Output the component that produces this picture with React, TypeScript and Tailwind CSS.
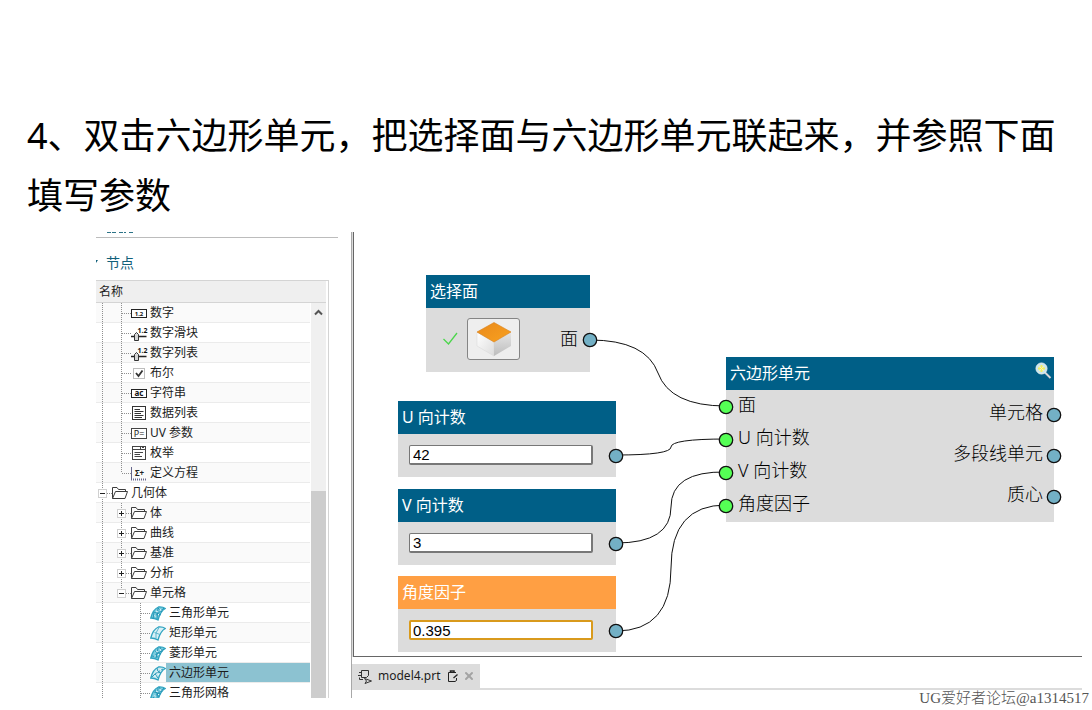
import React, { useState } from "react";
import { X } from "lucide-react";

type Guide = "line" | "tee" | "end" | "plus" | "minus" | "minusEnd" | "blank";

type Row = {
  label: string;
  icon: string;
  guides: Guide[];
};

const rows: Row[] = [
  { label: "数字", icon: "number", guides: ["line", "tee"] },
  { label: "数字滑块", icon: "slider", guides: ["line", "tee"] },
  { label: "数字列表", icon: "slider", guides: ["line", "tee"] },
  { label: "布尔", icon: "bool", guides: ["line", "tee"] },
  { label: "字符串", icon: "string", guides: ["line", "tee"] },
  { label: "数据列表", icon: "list", guides: ["line", "tee"] },
  { label: "UV 参数", icon: "uv", guides: ["line", "tee"] },
  { label: "枚举", icon: "enum", guides: ["line", "tee"] },
  { label: "定义方程", icon: "equation", guides: ["line", "end"] },
  { label: "几何体", icon: "folder", guides: ["minus"] },
  { label: "体", icon: "folder", guides: ["line", "plus"] },
  { label: "曲线", icon: "folder", guides: ["line", "plus"] },
  { label: "基准", icon: "folder", guides: ["line", "plus"] },
  { label: "分析", icon: "folder", guides: ["line", "plus"] },
  { label: "单元格", icon: "folder", guides: ["line", "minusEnd"] },
  { label: "三角形单元", icon: "tri", guides: ["line", "blank", "tee"] },
  { label: "矩形单元", icon: "rect", guides: ["line", "blank", "tee"] },
  { label: "菱形单元", icon: "rhomb", guides: ["line", "blank", "tee"] },
  { label: "六边形单元", icon: "hex", guides: ["line", "blank", "tee"] },
  { label: "三角形网格", icon: "mesh", guides: ["line", "blank", "tee"] },
];

const TreeGuide = ({ type, first }: { type: Guide; first: boolean }) => {
  const box = type === "plus" || type === "minus" || type === "minusEnd";
  const stopsHalfway = type === "end" || type === "minusEnd";
  return (
    <svg
      className={first ? "w-4 h-5 shrink-0" : "w-[19px] h-5 shrink-0"}
      viewBox={first ? "3 0 16 20" : "0 0 19 20"}
      aria-hidden="true"
    >
      {type !== "blank" && (
        <path
          d={stopsHalfway ? "M9.5 0V10" : "M9.5 0V20"}
          stroke="#8f8f8f"
          strokeDasharray="1 1"
        />
      )}
      {type !== "blank" && type !== "line" && (
        <path d="M10 10.5H19" stroke="#8f8f8f" strokeDasharray="1 1" />
      )}
      {box && (
        <>
          <rect x="5.5" y="6.5" width="8" height="8" fill="#fff" stroke="#d0d0d0" />
          <path
            d={type === "plus" ? "M7 10.5H12M9.5 8V13" : "M7 10.5H12"}
            stroke="#222"
          />
        </>
      )}
    </svg>
  );
};

const meshLines: Record<string, string> = {
  tri: "M4 7L11 10M8 3L7 14M14 3L4 12M8 3L12 7M4 7L3 14",
  rect: "M4.5 7.5L10 9.5M9 2.5L6 8L6 13.5",
  rhomb: "M5 6L11 9M8 3L6 13M14 4L4 11M10 2L12 7M2 11L8 12",
  hex: "M7 3L8 7L13 4M8 7L5 9L8 13M5 9L2 12M8 7L11 8",
  mesh: "M4 7L11 9M8 3L7 14M14 3L3 13M9 2L12 7M5 5L9 12",
};

const TreeIcon = ({ name }: { name: string }) => {
  if (name in meshLines) {
    return (
      <svg className="size-4 shrink-0" viewBox="0 0 16 16" fill="none" aria-hidden="true">
        <path
          d="M0.8 13C2 8 5 3.500 8.500 2C11 1.800 13.500 2.200 15.300 3.500C11.500 5.500 9.500 9.500 8 15C6 13.800 3.500 13 0.800 13Z"
          fill={name === "rect" ? "#d9f0f6" : name === "hex" ? "#c4e8f0" : "#7accdf"}
          stroke="#2fa3c0"
          strokeWidth="1.3"
        />
        <path d={meshLines[name]} stroke={name === "rect" ? "#4fb0ca" : "#1f92b2"} strokeWidth="0.9" />
        {name !== "rect" && <path d="M6 6L8 7M10 4L11 6M4 11L6 11M8 10L9 9" stroke="#eefafc" />}
      </svg>
    );
  }
  return (
    <svg className="size-4 shrink-0 overflow-visible" viewBox="0 0 16 16" fill="none" aria-hidden="true">
      {name === "folder" && (
        <g stroke="#3c3c3c">
          <path d="M0.5 13.5V2.5H5L6.5 4.5H13.5V6.5" />
          <path d="M0.5 13.5L3.5 6.5H15.5L13 13.5Z" fill="#fff" />
        </g>
      )}
      {name === "number" && (
        <>
          <rect x="0.5" y="4.5" width="15" height="8" fill="#fff" stroke="#222" />
          <text x="8" y="11" fontSize="6" fontWeight="700" textAnchor="middle" fill="#111">1.2</text>
        </>
      )}
      {name === "slider" && (
        <>
          <path d="M0 11.5H3M8 11.5H15.5" stroke="#222" strokeWidth="1.4" />
          <path d="M3.5 15.5V9.5L5.5 7.5L7.5 9.5V15.5Z" fill="#d6d6d6" stroke="#333" />
          <text x="11.5" y="8" fontSize="7" fontWeight="700" textAnchor="middle" fill="#111">1.2</text>
        </>
      )}
      {name === "bool" && (
        <>
          <rect x="2.5" y="3.5" width="11" height="10" fill="#fff" stroke="#bdbdbd" />
          <path d="M5 8L7.5 11L11.5 5.5" stroke="#333" strokeWidth="1.8" />
        </>
      )}
      {name === "string" && (
        <>
          <rect x="0.5" y="4.5" width="15" height="8" fill="#fff" stroke="#222" />
          <text x="8" y="11" fontSize="8" fontWeight="700" textAnchor="middle" fill="#111">ac</text>
        </>
      )}
      {name === "list" && (
        <g stroke="#333">
          <rect x="1.5" y="1.5" width="13" height="13" fill="#fff" />
          <path d="M3.5 4.5H9M3.5 6.5H12.5M3.5 8.5H10M3.5 10.5H12.5M3.5 12.5H11" />
        </g>
      )}
      {name === "uv" && (
        <>
          <rect x="0.5" y="3.5" width="15" height="10" fill="#fff" stroke="#444" />
          <text x="8" y="12" fontSize="9" textAnchor="middle" fill="#222">P=</text>
        </>
      )}
      {name === "enum" && (
        <g stroke="#444">
          <rect x="1.5" y="1.5" width="13" height="13" fill="#fff" />
          <path d="M1.5 4.5H14.5M9.5 1.5V4.5M11 2.5H13M3.5 7.5H12M3.5 9.5H9M3.5 11.5H11" />
        </g>
      )}
      {name === "equation" && (
        <>
          <path d="M0.5 2V15.5" stroke="#66668c" />
          <path d="M2 14.5H15" stroke="#66668c" strokeDasharray="1 1" strokeWidth="2" />
          <text x="8.5" y="11" fontSize="8" fontWeight="700" textAnchor="middle" fill="#222">Σ+</text>
        </>
      )}
    </svg>
  );
};

const Port = ({ side, color }: { side: "left" | "right"; color: string }) => (
  <svg
    className={`absolute top-1/2 -translate-y-1/2 z-10 size-4 ${
      side === "left" ? "-left-2" : "-right-2"
    }`}
    viewBox="0 0 16 16"
    aria-hidden="true"
  >
    <circle cx="8" cy="8" r="6.7" fill={color} stroke="#111" strokeWidth="1.3" />
  </svg>
);

const params = [
  { id: "u", title: "U 向计数", value: "42", place: "top-[169px]", active: false },
  { id: "v", title: "V 向计数", value: "3", place: "top-[257px]", active: false },
  { id: "angle", title: "角度因子", value: "0.395", place: "top-[344px]", active: true },
];

const inputs = ["面", "U 向计数", "V 向计数", "角度因子"];
const outputs = ["单元格", "多段线单元", "质心"];

const wires = [
  "M236 108Q292 108 304 141T372 174",
  "M262 223Q317 223 317 215T372 207",
  "M262 311Q317 311 317 275T372 240",
  "M262 399Q317 399 317 336T372 273",
];

const NodeTree = () => {
  const [selected, setSelected] = useState("六边形单元");

  return (
    <aside className="w-[242px] mr-[13px] shrink-0 flex flex-col overflow-hidden">
      <svg className="h-[5px] w-full shrink-0" aria-hidden="true">
        <path d="M11 0.5H20M23 0.5H30M33 0.5H37" stroke="#2d7488" strokeDasharray="4 1" />
      </svg>
      <h2 className="relative border-t border-[#bcbcbc] pl-[10px] pt-[11px] h-[43px] shrink-0 text-sm leading-7 text-[#12607a]">
        <svg className="absolute left-0 top-[22px] size-1" viewBox="0 0 4 4" aria-hidden="true">
          <path d="M0 0H2L0 3Z" fill="#12607a" />
        </svg>
        节点
      </h2>
      <div className="flex flex-col flex-1 min-h-0 mr-[9px] border-t border-r border-[#d4d4d4] pr-[2px] text-xs text-[#1c1c1c]">
        <div className="h-[22px] shrink-0 border-b border-[#d4d4d4] bg-[#efefef] pl-[3px] leading-[22px]">
          名称
        </div>
        <div className="flex flex-1 min-h-0">
          <ul className="flex-1 overflow-hidden">
            {rows.map((row) => (
              <li key={row.label} className="h-5 flex items-center odd:bg-[#fafafa] border-b border-[#ebebeb]">
                {row.guides.map((guide, i) => (
                  <TreeGuide key={i} type={guide} first={i === 0} />
                ))}
                <TreeIcon name={row.icon} />
                <button
                  type="button"
                  onClick={() => setSelected(row.label)}
                  className={`flex-1 h-[19px] pl-[3px] text-left leading-[18px] whitespace-nowrap ${
                    selected === row.label ? "bg-[#8cc2d1]" : ""
                  }`}
                >
                  {row.label}
                </button>
              </li>
            ))}
          </ul>
          <div className="w-[15px] ml-px bg-[#f0f0f0] flex flex-col">
            <svg className="w-[15px] h-[18px] shrink-0" viewBox="0 0 15 18" fill="none" aria-hidden="true">
              <path d="M4 11.5L7.5 8L11 11.5" stroke="#555" strokeWidth="2" />
            </svg>
            <div className="mt-auto h-[52.5%] bg-[#cdcdcd]" />
          </div>
        </div>
      </div>
    </aside>
  );
};

const Canvas = () => (
  <div className="relative flex-1 min-h-0 border-l border-b border-[#666]">
    <svg className="absolute inset-0 size-full" fill="none" stroke="#111" aria-hidden="true">
      {wires.map((d) => (
        <path key={d} d={d} />
      ))}
    </svg>

    {/* Face picker */}
    <section className="absolute left-[72px] top-[43px] w-[164px] bg-[#dcdcdc]">
      <h3 className="h-[33px] bg-[#005f87] pl-1 text-base leading-[33px] text-white">选择面</h3>
      <div className="relative h-16 flex items-start pt-[10px] pl-4 pr-3">
        <svg className="size-[18px] mt-[11px]" viewBox="0 0 18 18" fill="none" aria-hidden="true">
          <path d="M1.5 10L6.5 15L15 4" stroke="#4bd64b" strokeWidth="1.3" />
        </svg>
        <button
          type="button"
          aria-label="选择面"
          className="ml-[7px] w-[53px] h-[42px] rounded-[3px] border border-[#858585] bg-[#eee] flex justify-center items-center"
        >
          <svg className="w-9 h-9" viewBox="0 0 36 36" aria-hidden="true">
            <defs>
              <linearGradient id="cubeTop" x1="0" y1="0" x2="1" y2="1">
                <stop offset="0" stopColor="#e98a1c" />
                <stop offset="1" stopColor="#f9a11f" />
              </linearGradient>
              <linearGradient id="cubeLeft" x1="0" y1="0" x2="1" y2="1">
                <stop offset="0" stopColor="#fff" />
                <stop offset="1" stopColor="#dcdcdc" />
              </linearGradient>
              <linearGradient id="cubeRight" x1="0" y1="0" x2="0" y2="1">
                <stop offset="0" stopColor="#e6e6e6" />
                <stop offset="1" stopColor="#bdbdbd" />
              </linearGradient>
            </defs>
            <path d="M1 11L18 21V35L1 25Z" fill="url(#cubeLeft)" stroke="#d6d6d6" strokeWidth="0.5" />
            <path d="M35 11L18 21V35L35 25Z" fill="url(#cubeRight)" />
            <path d="M18 1.5L35 11L18 21L1 11Z" fill="url(#cubeTop)" stroke="#d97f17" strokeWidth="0.6" />
          </svg>
        </button>
        <span className="ml-auto text-lg leading-10 font-light">面</span>
        <Port side="right" color="#73b0c5" />
      </div>
    </section>

    {/* Numeric parameters */}
    {params.map((p) => (
      <section key={p.id} className={`absolute left-[44px] w-[218px] bg-[#dcdcdc] ${p.place}`}>
        <label
          htmlFor={p.id}
          className={`block h-[33px] pl-1 text-base leading-[33px] text-white ${
            p.active ? "bg-[#ff9f43]" : "bg-[#005f87]"
          }`}
        >
          {p.title}
        </label>
        <div className="relative h-[43px] pt-[11px] pl-[11px]">
          <input
            id={p.id}
            defaultValue={p.value}
            className={`block w-[184px] h-5 rounded-[2px] bg-white font-['Liberation_Sans',sans-serif] text-[15px] leading-4 outline-none ${
              p.active
                ? "border-2 border-[#d99a1c] pl-[2px]"
                : "border border-r-2 border-b-2 border-[#777] pl-[3px]"
            }`}
          />
          <Port side="right" color="#73b0c5" />
        </div>
      </section>
    ))}

    {/* Hexagon cell */}
    <section className="absolute left-[372px] top-[125px] w-[328px] bg-[#dcdcdc]">
      <h3 className="h-[33px] bg-[#005f87] flex justify-between pl-1 pr-[2px] text-base leading-[33px] text-white">
        六边形单元
        <svg className="size-[18px] mt-1" viewBox="0 0 18 18" fill="none" aria-hidden="true">
          <path d="M10.5 11L16.5 17" stroke="#d8d8d8" strokeWidth="2" />
          <circle cx="7.5" cy="7.5" r="5.5" fill="#c9e6ee" stroke="#e6eeee" />
          <path d="M7.5 4V11M4 7.5H11" stroke="#f4ef5a" strokeWidth="2" />
          <path d="M5 5L10 10M10 5L5 10" stroke="#fbf8a8" />
        </svg>
      </h3>
      <div className="flex justify-between text-lg font-light">
        <ul>
          {inputs.map((name) => (
            <li key={name} className="relative h-[33px] pl-3 leading-7">
              <Port side="left" color="#55ff55" />
              {name}
            </li>
          ))}
        </ul>
        <ul className="pt-1 text-right">
          {outputs.map((name) => (
            <li key={name} className="relative h-[41px] pr-[11px] leading-9">
              {name}
              <Port side="right" color="#73b0c5" />
            </li>
          ))}
        </ul>
      </div>
    </section>
  </div>
);

const App = () => {
  return (
    <div className="relative h-screen flex flex-col bg-white pb-3 text-black font-['Noto_Sans','Noto_Sans_CJK_SC',sans-serif]">
      <h1 className="px-[27px] pt-[106px] pb-[6px] text-4xl leading-[60px]">
        4、双击六边形单元，把选择面与六边形单元联起来，并参照下面填写参数
      </h1>

      <main className="flex-1 min-h-0 flex ml-24 mr-[10px]">
        <NodeTree />
        <div className="flex-1 min-w-0 flex flex-col border-l border-[#a8a8a8] pb-2">
          <div className="flex-1 min-h-0 flex flex-col pl-px bg-[#dcdcdc]">
            <div className="flex-1 min-h-0 flex flex-col bg-white">
              <Canvas />
            </div>
          </div>
          <div className="mt-[7px] flex border-b-2 border-[#dcdcdc]">
            <div className="h-6 w-32 bg-[#dcdcdc] flex items-center pl-[6px] text-xs text-[#1c1c1c]">
              <svg className="size-[15px]" viewBox="0 0 15 15" fill="none" stroke="#333" aria-hidden="true">
                <path d="M3.5 1.5H10.5V6.5L8.5 8.5H3.5ZM1 3.5H3.5M0 6.5H3.5M1.5 8.5V10.5H5" />
                <path d="M6.5 9.5L13.5 12L7 14.5L8.5 12Z" />
              </svg>
              <span className="ml-[5px]">model4.prt</span>
              <svg className="ml-[7px] size-3" viewBox="0 0 12 12" fill="none" stroke="#222" aria-hidden="true">
                <path d="M6 11.5H1.5V2.5H9M9.5 8V10.5L8 11.5H6" />
                <path d="M3.5 2.5V1H7V2.5" strokeWidth="1.5" />
                <path d="M6.5 8L10.5 4.5" strokeWidth="1.3" />
              </svg>
              <button type="button" aria-label="关闭" className="ml-1 text-[#a3a3a3]">
                <X size={12} strokeWidth={4} />
              </button>
            </div>
          </div>
        </div>
      </main>

      <p className="absolute right-[3px] bottom-0 font-['Liberation_Serif','Noto_Sans_CJK_SC',serif] text-[15px] leading-6 font-light text-[#555]">
        UG爱好者论坛@a1314517
      </p>
    </div>
  );
};

export default App;
